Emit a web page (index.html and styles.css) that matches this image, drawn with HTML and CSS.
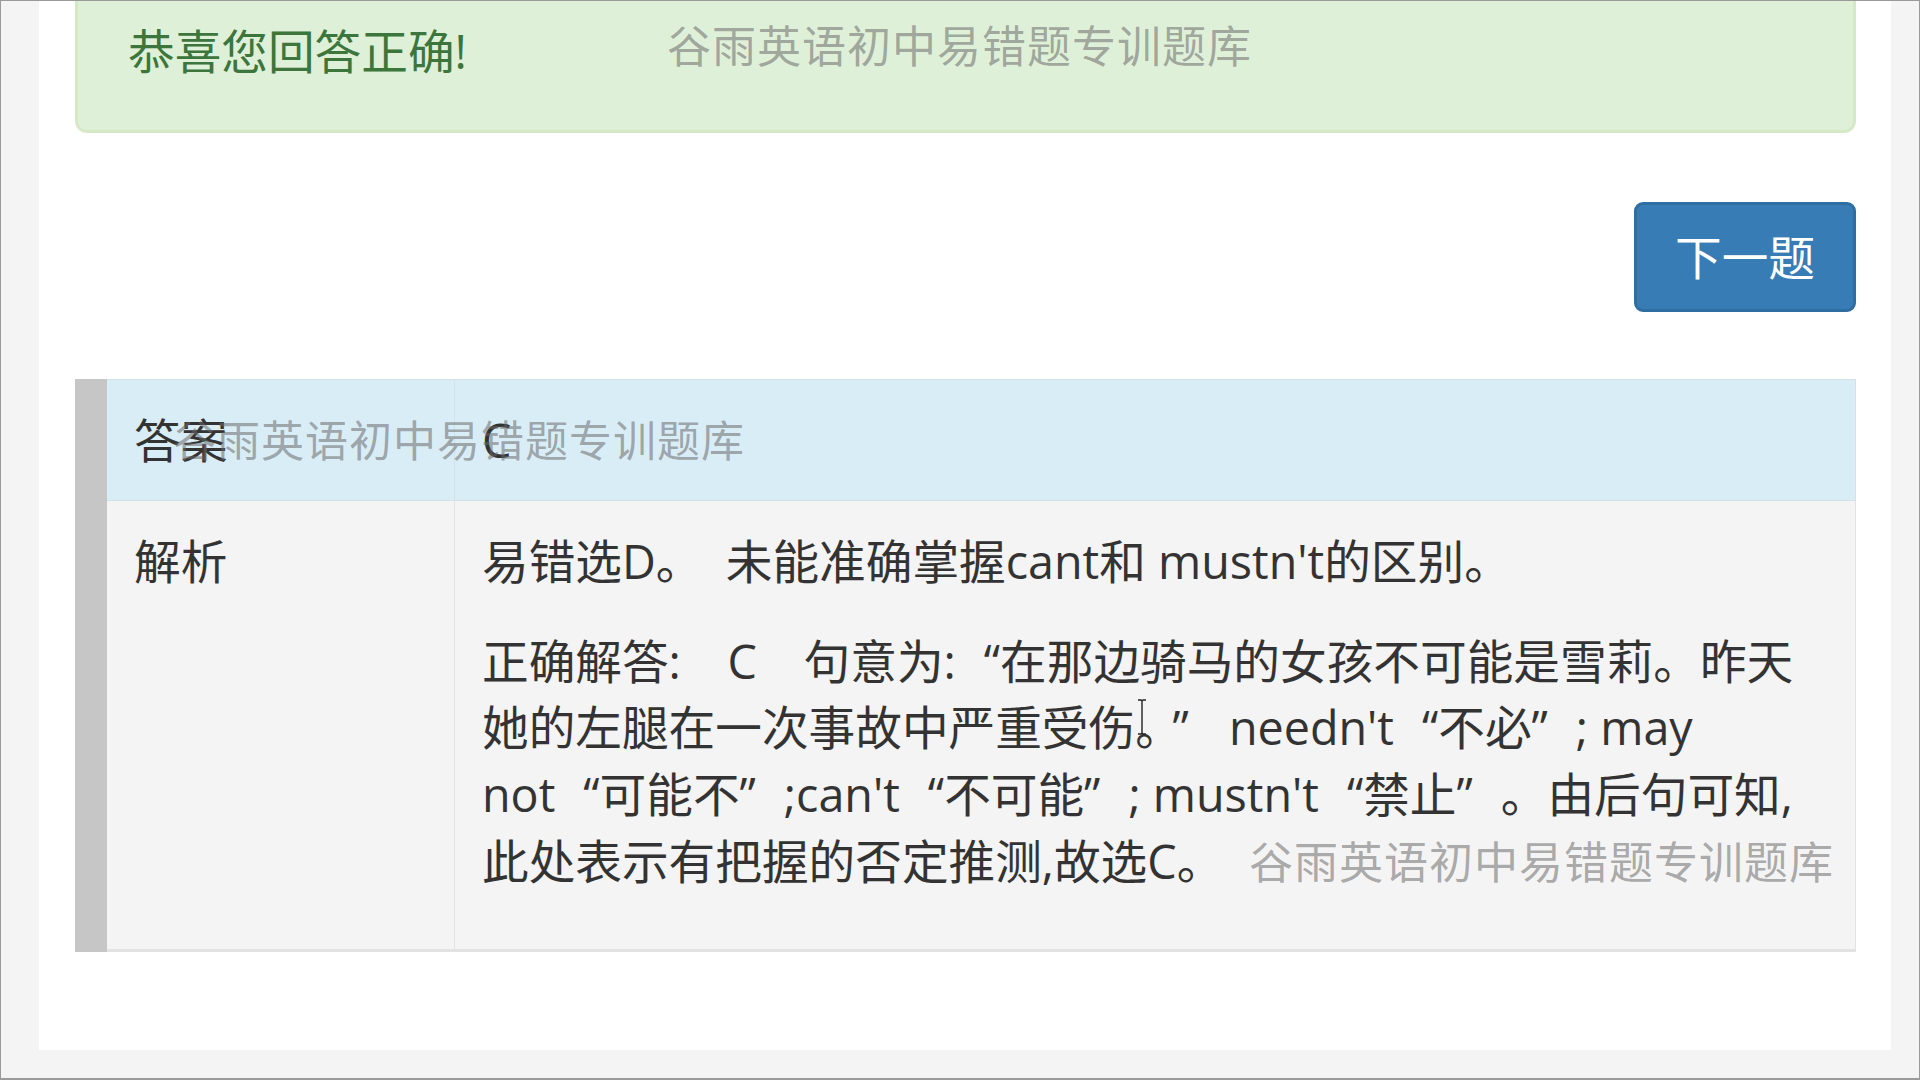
FILE: index.html
```html
<!DOCTYPE html>
<html lang="zh-CN">
<head>
<meta charset="utf-8">
<title>谷雨英语初中易错题专训题库</title>
<link rel="stylesheet" href="styles.css">
</head>
<body>
<div class="frame">
  <div class="panel">
    <div class="alert">恭喜您回答正确!</div>
    <div class="actions"><button class="btn" type="button">下一题</button></div>
    <table class="answer">
      <tr class="row-answer">
        <th>答案</th>
        <td>C</td>
      </tr>
      <tr class="row-explain">
        <th>解析</th>
        <td class="explain">
          <p>易错选D。　未能准确掌握cant和 mustn't的区别。</p>
          <p>正确解答:　C　句意为:<span class="lq">“</span>在那边骑马的女孩不可能是雪莉。昨天她的左腿在一次事故中严重受伤。<span class="rq rq-wide">”</span> needn't<span class="lq">“</span>不必<span class="rq">”</span>; may not<span class="lq">“</span>可能不<span class="rq">”</span>;can't<span class="lq">“</span>不可能<span class="rq">”</span>; mustn't<span class="lq">“</span>禁止<span class="rq">”</span>。由后句可知,此处表示有把握的否定推测,故选C。</p>
          <svg class="cursor" width="10" height="36" viewBox="0 0 10 36"><path d="M1 1h3l1 1 1-1h3M5 2v32M1 35h3l1-1 1 1h3" fill="none" stroke="#222" stroke-width="1.4"/></svg>
        </td>
      </tr>
    </table>
  </div>
  <div class="wm wm-top">谷雨英语初中易错题专训题库</div>
  <div class="wm wm-mid">谷雨英语初中易错题专训题库</div>
  <div class="wm wm-bottom">谷雨英语初中易错题专训题库</div>
</div>
</body>
</html>
```

FILE: styles.css
```css
html, body {
  margin: 0;
  padding: 0;
}
body {
  background: #f4f4f4;
  font-family: "Open Sans", "Noto Sans CJK SC", sans-serif;
  color: #333;
  font-size: 46.67px;
  line-height: 66.67px;
}
.frame {
  position: relative;
  width: 1920px;
  height: 1080px;
  box-sizing: border-box;
  border: 1px solid #9a9a9a;
  border-bottom-width: 2px;
  background: #f4f4f4;
  overflow: hidden;
}
.panel {
  margin-left: 38px;
  width: 1852px;
  box-sizing: border-box;
  background: #fff;
  padding: 0 35px 98px 36px;
}
.alert {
  background: #dff0d8;
  border: 3px solid #d6e9c6;
  border-top: none;
  border-radius: 0 0 12px 12px;
  color: #3c763d;
  padding: 17px 50px 45px;
}
.actions {
  display: flex;
  justify-content: flex-end;
  margin-top: 69px;
}
.btn {
  font-family: inherit;
  font-size: 46.67px;
  line-height: 66.67px;
  color: #fff;
  background: #377cb4;
  border: 3px solid #2f6ea3;
  border-radius: 9px;
  padding: 19px 38px;
  margin: 0;
}
.answer {
  margin-top: 67px;
  width: 100%;
  border-collapse: collapse;
  border-left: 32px solid #c6c6c6;
  border-bottom: 3px solid #e2e2e2;
}
.answer th,
.answer td {
  text-align: left;
  vertical-align: top;
  font-weight: normal;
  padding: 26.67px 27px;
  border: 1px solid #dcdcdc;
}
.answer th {
  width: 293px;
}
.row-answer th,
.row-answer td {
  background: #d9edf7;
  border-color: #d3e2e8;
}
.row-explain th,
.row-explain td {
  background: #f4f4f4;
  border-color: #e2e2e2;
}
.row-explain td {
  padding-bottom: 22px;
}
.explain {
  position: relative;
}
.explain p {
  margin: 0 0 33px;
}
.lq {
  padding-left: 0.6em;
}
.rq {
  padding-right: 0.6em;
}
.rq-wide {
  padding-left: 0.3em;
}
.cursor {
  position: absolute;
  left: 682px;
  top: 198px;
}
.wm {
  position: absolute;
  font-family: "Noto Sans CJK SC", sans-serif;
  font-size: 44px;
  line-height: 44px;
  letter-spacing: 1px;
  color: rgba(105, 105, 105, 0.55);
  white-space: nowrap;
  pointer-events: none;
}
.wm-top {
  left: 666px;
  top: 21px;
}
.wm-mid {
  left: 172px;
  top: 415px;
  font-size: 43px;
  letter-spacing: 1px;
}
.wm-bottom {
  left: 1248px;
  top: 837px;
}
```
